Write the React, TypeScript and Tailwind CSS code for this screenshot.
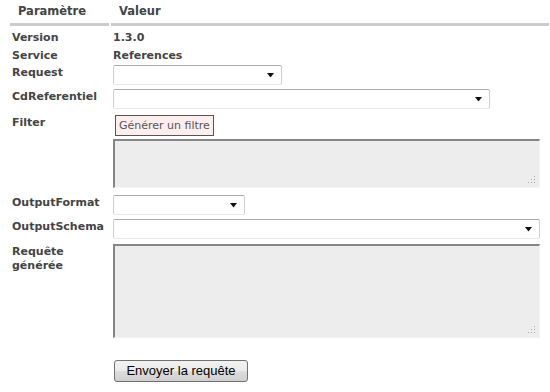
import React from "react";

function Arrow() {
  return (
    <svg width="7" height="5" viewBox="0 0 7 5" className="block">
      <polygon points="0,0 7,0 3.5,4.5" fill="#111" />
    </svg>
  );
}

function FakeSelect({ w }: { w: string }) {
  return (
    <div
      className={`${w} h-[20px] flex items-center justify-end pr-[7px] bg-white rounded-[2px] border border-t-[#a9a9a9] border-l-[#cfcfcf] border-r-[#cfcfcf] border-b-[#e2e8ee]`}
    >
      <Arrow />
    </div>
  );
}

function Grip() {
  return (
    <svg width="8" height="8" viewBox="0 0 8 8" className="absolute right-[3px] bottom-[3px]">
      <rect x="6" y="0" width="1" height="1" fill="#aaa" />
      <rect x="6" y="3" width="1" height="1" fill="#aaa" />
      <rect x="3" y="3" width="1" height="1" fill="#aaa" />
      <rect x="6" y="6" width="1" height="1" fill="#aaa" />
      <rect x="3" y="6" width="1" height="1" fill="#aaa" />
      <rect x="0" y="6" width="1" height="1" fill="#aaa" />
    </svg>
  );
}

function FakeTextarea({ h }: { h: string }) {
  return (
    <div
      className={`relative w-[427px] ${h} bg-[#ededed] border-t-2 border-l-2 border-r border-b border-t-[#858585] border-l-[#858585] border-r-[#f4f4f4] border-b-[#f4f4f4]`}
    >
      <Grip />
    </div>
  );
}

function Label({ children }: { children: React.ReactNode }) {
  return <div className="w-[103px] shrink-0 pl-[2px] pt-[1px] font-bold leading-[14px]">{children}</div>;
}

export default function App() {
  return (
    <div className="w-[550px] h-[392px] bg-white font-['DejaVu_Sans',sans-serif] text-[11px] text-[#444] overflow-hidden">
      <div className="ml-[10px] w-[539px]">
        <div className="flex gap-[2px] h-[26px] font-bold text-[11.5px]">
          <div className="w-[99px] border-b-[3px] border-[#cccccc] pl-[8px] pt-[5px] leading-[13px]">Paramètre</div>
          <div className="flex-1 border-b-[3px] border-[#cccccc] pl-[8px] pt-[5px] leading-[13px]">Valeur</div>
        </div>

        <div className="flex mt-[3px] h-[18px] leading-[18px] font-bold">
          <div className="w-[103px] pl-[2px]">Version</div>
          <div>1.3.0</div>
        </div>
        <div className="flex h-[17px] leading-[18px] font-bold">
          <div className="w-[103px] pl-[2px]">Service</div>
          <div>References</div>
        </div>

        <div className="flex mt-[1px]">
          <Label>Request</Label>
          <FakeSelect w="w-[169px]" />
        </div>

        <div className="flex mt-[4px]">
          <Label>CdReferentiel</Label>
          <FakeSelect w="w-[377px]" />
        </div>

        <div className="flex mt-[6px]">
          <Label>Filter</Label>
          <div className="flex flex-col items-start">
            <div className="ml-[2px] h-[21px] leading-[19px] px-[3px] border border-[#555] bg-[#fdeeee] text-[#555] text-[11px]">
              Générer un filtre
            </div>
            <div className="mt-[3px]">
              <FakeTextarea h="h-[49px]" />
            </div>
          </div>
        </div>

        <div className="flex mt-[7px]">
          <Label>OutputFormat</Label>
          <FakeSelect w="w-[132px]" />
        </div>

        <div className="flex mt-[4px]">
          <Label>OutputSchema</Label>
          <FakeSelect w="w-[427px]" />
        </div>

        <div className="flex mt-[5px]">
          <Label>
            Requête
            <br />
            générée
          </Label>
          <FakeTextarea h="h-[94px]" />
        </div>

        <div className="flex mt-[22px]">
          <div className="w-[104px] shrink-0" />
          <button className="w-[134px] h-[22px] rounded-[3px] border border-[#707070] bg-[linear-gradient(#f2f2f2_0%,#ebebeb_50%,#dddddd_50%,#cfcfcf_100%)] font-['Liberation_Sans',Arial,sans-serif] text-[13px] text-black leading-[20px]">
            Envoyer la requête
          </button>
        </div>
      </div>
    </div>
  );
}
